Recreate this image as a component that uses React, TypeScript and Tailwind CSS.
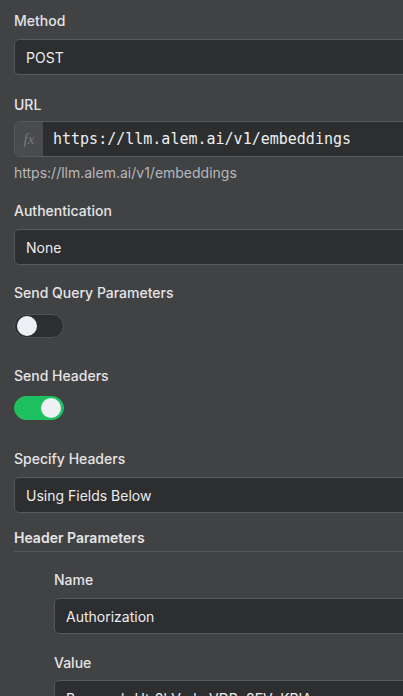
const font = { fontFamily: "Inter, 'Noto Sans', sans-serif" };

function Label({ children, className = "" }: { children: React.ReactNode; className?: string }) {
    return <div className={`text-[14px] leading-5 font-medium text-[#e4e4e6] ${className}`}>{children}</div>;
}

function Field({ value, className = "" }: { value: string; className?: string }) {
    return (
        <div
            className={`h-9 flex items-center rounded-l-[5px] border border-[#58595c] bg-[#2d2e2f] pl-[11px] text-[14px] text-[#ececee] ${className}`}
        >
            {value}
        </div>
    );
}

function Toggle({ on, className = "" }: { on: boolean; className?: string }) {
    return (
        <div
            className={`relative h-6 w-[50px] rounded-full border ${
                on ? "bg-[#1fc060] border-[#1fc060]" : "bg-[#2d2e2f] border-[#4f5053]"
            } ${className}`}
        >
            <span
                className={`absolute top-[1px] h-5 w-5 rounded-full bg-[#eef0f6] ${on ? "right-[2px]" : "left-[2px]"}`}
            />
        </div>
    );
}

export default function App() {
    return (
        <div className="w-[403px] h-[696px] overflow-hidden bg-[#414244]" style={font}>
            <div className="w-[600px] pl-[14px] pt-[11px] flex flex-col">
                <Label>Method</Label>
                <Field value="POST" className="mt-2" />

                <Label className="mt-5">URL</Label>
                <div className="mt-[6px] h-9 flex rounded-l-[5px] border border-[#58595c] bg-[#2d2e2f] overflow-hidden">
                    <div className="w-[28px] flex items-center justify-center bg-[#4a4b4e] text-[#77787c] italic text-[15px]" style={{ fontFamily: "'Liberation Serif', serif" }}>
                        fx
                    </div>
                    <div
                        className="flex items-center pl-[10px] text-[15px] text-[#eeeef0]"
                        style={{ fontFamily: "'DejaVu Sans Mono', monospace" }}
                    >
                        https://llm.alem.ai/v1/embeddings
                    </div>
                </div>
                <div className="mt-[6px] text-[14px] leading-5 text-[#b7b8bc]">https://llm.alem.ai/v1/embeddings</div>

                <Label className="mt-[18px]">Authentication</Label>
                <Field value="None" className="mt-2" />

                <Label className="mt-[18px]">Send Query Parameters</Label>
                <Toggle on={false} className="mt-[11px]" />

                <Label className="mt-7">Send Headers</Label>
                <Toggle on={true} className="mt-[10px]" />

                <Label className="mt-[29px]">Specify Headers</Label>
                <Field value="Using Fields Below" className="mt-2" />

                <div className="mt-[15px] pb-[3px] border-b border-[#55565a] text-[14px] leading-5 font-semibold text-[#e4e4e6]">
                    Header Parameters
                </div>

                <div className="pl-10 flex flex-col">
                    <Label className="mt-[18px]">Name</Label>
                    <Field value="Authorization" className="mt-2" />

                    <Label className="mt-[19px]">Value</Label>
                    <Field value="Bearer sk-Utr8kVmbxVDPn8EVeKPIA" className="mt-[7px]" />
                </div>
            </div>
        </div>
    );
}
